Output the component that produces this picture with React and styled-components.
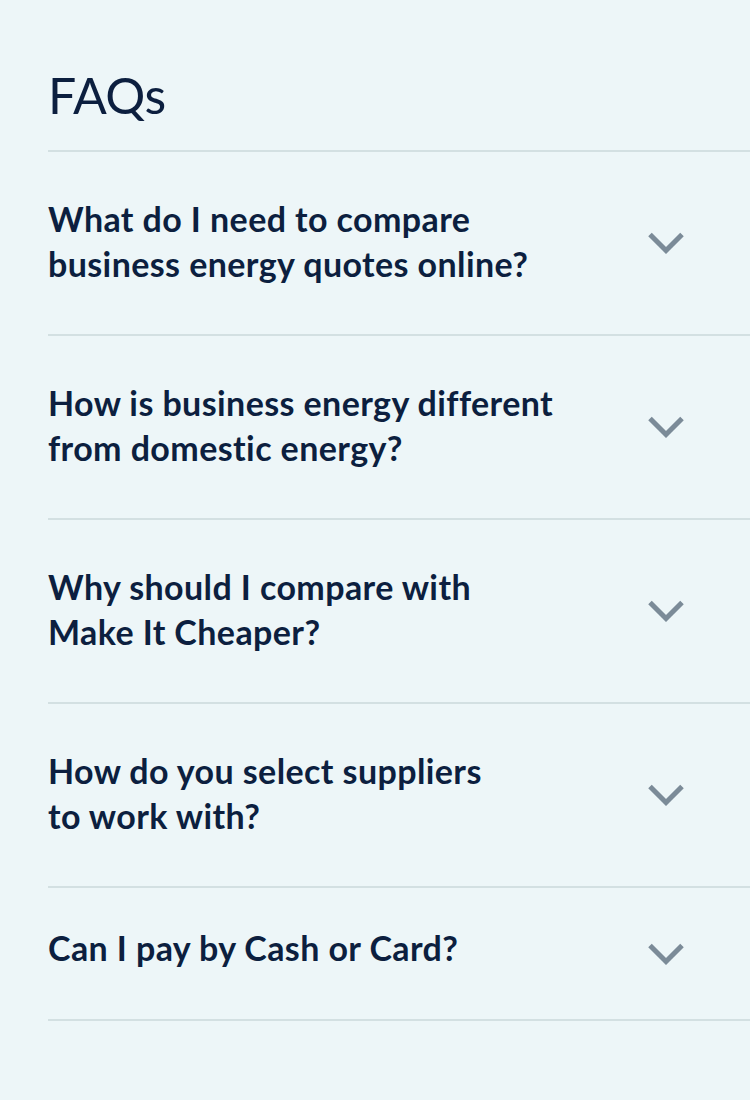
import React from 'react'
import styled, { createGlobalStyle } from 'styled-components'

const GlobalStyle = createGlobalStyle`
  html, body {
    margin: 0;
    padding: 0;
    background: #edf6f8;
  }
  body {
    font-family: Lato, "Open Sans", "Liberation Sans", sans-serif;
    color: #0c1f3f;
  }
`

const Section = styled.section`
  padding: 65px 0 80px 48px;
  background: #edf6f8;
  min-height: 1100px;
  box-sizing: border-box;
`

const Title = styled.h2`
  margin: 0 0 25px;
  font-size: 50px;
  line-height: 60px;
  font-weight: 400;
  color: #0c1f3f;
  letter-spacing: -0.5px;
`

const List = styled.div`
  border-top: 2px solid #d3e0e2;
`

const Item = styled.div`
  display: flex;
  align-items: center;
  justify-content: space-between;
  padding-right: 66px;
  border-bottom: 2px solid #d3e0e2;
`

// single-line questions sit a little higher in a shorter row
const Question = styled.h3`
  margin: 0;
  padding: ${p => (p.$single ? '37px 0 49px' : '44px 0 48px')};
  font-size: 34px;
  line-height: 45px;
  font-weight: 700;
  color: #0c1f3f;
  letter-spacing: 0.4px;
`

const Chevron = styled.svg`
  width: 36px;
  height: 24px;
  flex-shrink: 0;
`

const faqs = [
  ['What do I need to compare', 'business energy quotes online?'],
  ['How is business energy different', 'from domestic energy?'],
  ['Why should I compare with', 'Make It Cheaper?'],
  ['How do you select suppliers', 'to work with?'],
  ['Can I pay by Cash or Card?'],
]

export default function App() {
  return (
    <>
      <GlobalStyle />
      <Section>
        <Title>FAQs</Title>
        <List>
          {faqs.map((lines, i) => (
            <Item key={i}>
              <Question $single={lines.length === 1}>
                {lines.map((l, j) => (
                  <React.Fragment key={j}>
                    {j > 0 && <br />}
                    {l}
                  </React.Fragment>
                ))}
              </Question>
              <Chevron viewBox="0 0 36 24">
                <polyline
                  points="2,3.5 18,19.5 34,3.5"
                  fill="none"
                  stroke="#7b8b98"
                  strokeWidth="5"
                />
              </Chevron>
            </Item>
          ))}
        </List>
      </Section>
    </>
  )
}
